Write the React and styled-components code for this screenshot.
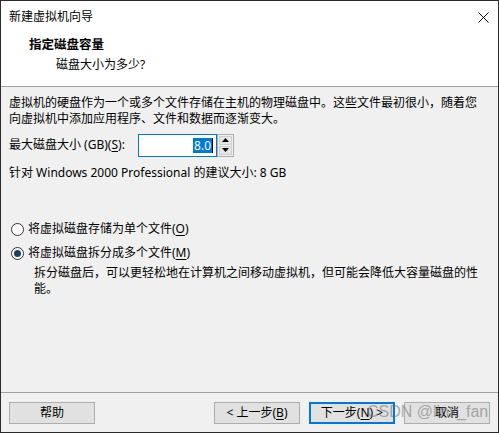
import React from "react";
import styled, { createGlobalStyle } from "styled-components";

const Global = createGlobalStyle`
  html, body { margin: 0; padding: 0; background: #f0f0f0; }
  body { font-family: "Noto Sans", "Noto Sans CJK SC", sans-serif; font-size: 12px; color: #000; }
  * { box-sizing: border-box; }
`;

const Window = styled.div`
  position: relative;
  width: 499px;
  height: 433px;
  border: 1px solid #2b2b2b;
  background: #f0f0f0;
  display: flex;
  flex-direction: column;
  overflow: hidden;
`;

const TitleBar = styled.div`
  height: 32px;
  background: #fff;
  display: flex;
  align-items: center;
  justify-content: space-between;
  padding: 0 9px 0 8px;
  line-height: 16px;
`;

const Header = styled.div`
  height: 54px;
  background: #fff;
  border-bottom: 1px solid #a0a0a0;
  padding: 4px 0 0 28px;
  display: flex;
  flex-direction: column;
  gap: 4px;
  line-height: 16px;
`;

const HeaderTitle = styled.div`
  font-weight: bold;
  font-size: 12.5px;
`;

const HeaderSub = styled.div`
  padding-left: 27px;
`;

const Body = styled.div`
  flex: 1;
  padding: 8px 8px 0 8px;
  display: flex;
  flex-direction: column;
  line-height: 16px;
`;

const Para = styled.div`
  margin-bottom: ${(p) => p.$mb || 0}px;
  padding-left: ${(p) => p.$pl || 0}px;
`;

const SizeRow = styled.div`
  display: flex;
  align-items: center;
  height: 24px;
  margin-top: 6px;
  margin-bottom: 8px;
`;

const Label = styled.span`
  width: 129px;
`;

const U = styled.span`
  text-decoration: underline;
  text-underline-offset: 2px;
`;

const Input = styled.div`
  width: 79px;
  height: 23px;
  border: 1px solid #0078d7;
  background: #fff;
  display: flex;
  align-items: center;
  justify-content: flex-end;
  padding-right: 3px;
`;

const Selected = styled.span`
  background: #0078d7;
  color: #fff;
  line-height: 15px;
  padding: 0 1px;
`;

const Caret = styled.span`
  width: 1px;
  height: 15px;
  background: #000;
`;

const Spinner = styled.div`
  width: 17px;
  height: 23px;
  border: 1px solid #adadad;
  background: #f0f0f0;
  display: flex;
  flex-direction: column;
  padding: 1px;
  gap: 1px;
`;

const SpinBtn = styled.div`
  flex: 1;
  background: #e5e5e5;
  border: 1px solid #cfcfcf;
  display: flex;
  align-items: center;
  justify-content: center;
`;

const RadioGroup = styled.div`
  margin-top: 40px;
  display: flex;
  flex-direction: column;
  gap: 8px;
`;

const RadioRow = styled.label`
  display: flex;
  align-items: center;
  gap: 4px;
  padding-left: 2px;
  height: 16px;
`;

const Circle = styled.span`
  width: 13px;
  height: 13px;
  border-radius: 50%;
  border: 1px solid #333;
  background: #fff;
  display: flex;
  align-items: center;
  justify-content: center;
  &::after {
    content: "";
    display: ${(p) => (p.$on ? "block" : "none")};
    width: 7px;
    height: 7px;
    border-radius: 50%;
    background: #1f3f66;
  }
`;

const Desc = styled.div`
  padding-left: 25px;
  margin-top: -4px;
`;

const Footer = styled.div`
  height: 40px;
  border-top: 1px solid #a0a0a0;
  display: flex;
  align-items: flex-start;
  padding: 9px 8px 0 8px;
`;

const Button = styled.div`
  width: 86px;
  height: 22px;
  background: #e1e1e1;
  border: ${(p) => (p.$focus ? "2px solid #0078d7" : "1px solid #adadad")};
  display: flex;
  align-items: center;
  justify-content: center;
  margin-left: ${(p) => p.$ml || 0}px;
  line-height: 16px;
`;

const Watermark = styled.div`
  position: absolute;
  left: 366px;
  top: 402px;
  font-family: "Liberation Sans", Arial, sans-serif;
  font-size: 16px;
  color: rgba(110, 110, 110, 0.55);
  pointer-events: none;
  white-space: nowrap;
`;

const CloseIcon = () => (
  <svg width="11" height="11" viewBox="0 0 11 11">
    <path d="M0.5 0.5 L10.5 10.5 M10.5 0.5 L0.5 10.5" stroke="#000" strokeWidth="1" />
  </svg>
);

const Arrow = ({ up }) => (
  <svg width="7" height="4" viewBox="0 0 7 4">
    <path d={up ? "M0 4 L3.5 0 L7 4 Z" : "M0 0 L3.5 4 L7 0 Z"} fill="#000" />
  </svg>
);

export default function App() {
  return (
    <>
      <Global />
      <Window>
        <TitleBar>
          <span>新建虚拟机向导</span>
          <CloseIcon />
        </TitleBar>
        <Header>
          <HeaderTitle>指定磁盘容量</HeaderTitle>
          <HeaderSub>磁盘大小为多少?</HeaderSub>
        </Header>
        <Body>
          <Para>
            虚拟机的硬盘作为一个或多个文件存储在主机的物理磁盘中。这些文件最初很小，随着您
            <br />
            向虚拟机中添加应用程序、文件和数据而逐渐变大。
          </Para>
          <SizeRow>
            <Label>
              最大磁盘大小 (GB)(<U>S</U>):
            </Label>
            <Input>
              <Selected>8.0</Selected>
              <Caret />
            </Input>
            <Spinner>
              <SpinBtn>
                <Arrow up />
              </SpinBtn>
              <SpinBtn>
                <Arrow />
              </SpinBtn>
            </Spinner>
          </SizeRow>
          <Para>针对 Windows 2000 Professional 的建议大小: 8 GB</Para>
          <RadioGroup>
            <RadioRow>
              <Circle />
              <span>
                将虚拟磁盘存储为单个文件(<U>O</U>)
              </span>
            </RadioRow>
            <RadioRow>
              <Circle $on />
              <span>
                将虚拟磁盘拆分成多个文件(<U>M</U>)
              </span>
            </RadioRow>
            <Desc>
              拆分磁盘后，可以更轻松地在计算机之间移动虚拟机，但可能会降低大容量磁盘的性
              <br />
              能。
            </Desc>
          </RadioGroup>
        </Body>
        <Footer>
          <Button>帮助</Button>
          <Button $ml={119}>
            &lt; 上一步(<U>B</U>)
          </Button>
          <Button $ml={9} $focus>
            下一步(<U>N</U>) &gt;
          </Button>
          <Button $ml={9}>取消</Button>
        </Footer>
        <Watermark>CSDN @linx_fan</Watermark>
      </Window>
    </>
  );
}
